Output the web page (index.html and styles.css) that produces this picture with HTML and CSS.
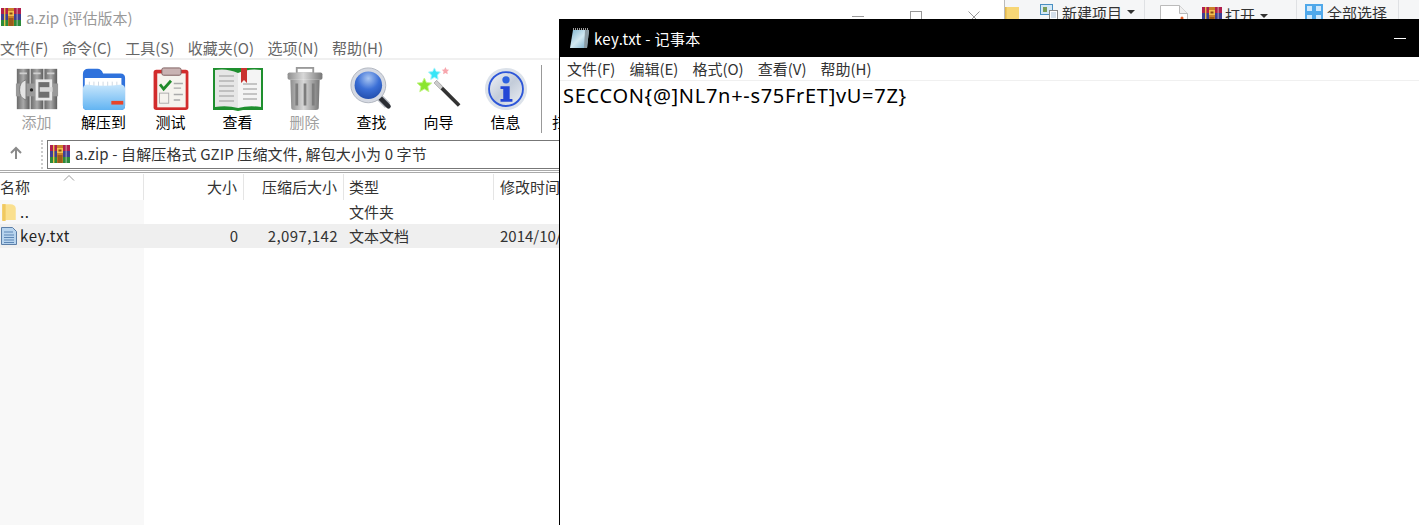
FILE: index.html
```html
<!DOCTYPE html>
<html lang="zh-CN">
<head>
<meta charset="utf-8">
<title>key.txt - 记事本</title>
<link rel="stylesheet" href="styles.css">
</head>
<body>
<svg class="defs" width="0" height="0" aria-hidden="true">
  <defs>
    <symbol id="rar" viewBox="0 0 20 18">
      <rect x="0" y="0" width="20" height="6" fill="#b01f4d"/>
      <rect x="0" y="6" width="20" height="6" fill="#3d3f94"/>
      <rect x="0" y="12" width="20" height="6" fill="#2c8a3a"/>
      <rect x="3" y="0" width="1.4" height="18" fill="#e8c14a"/>
      <rect x="15.5" y="0" width="1.4" height="18" fill="#d9d9d9" opacity=".5"/>
      <rect x="7" y="0" width="6" height="18" fill="#c9802a"/>
      <rect x="7" y="3" width="6" height="5" fill="#f2c14e"/>
      <rect x="8.5" y="4.5" width="3" height="2" fill="#8a4b14"/>
      <rect x="7.6" y="10" width="4.8" height="8" fill="#9c5a1c"/>
    </symbol>
  </defs>
</svg>
<div class="desktop">
  <div class="explorer">
    <svg class="ex-folder" viewBox="0 0 14 12"><rect width="14" height="12" fill="#f7d675"/><rect width="1.500" height="12" fill="#e3b84e"/></svg>
    <div class="ex-group ex-new">
      <svg class="ex-ic" viewBox="0 0 18 18"><rect x=".5" y=".5" width="12" height="10" fill="#d5e9f6" stroke="#4a90c2"/><rect x="3" y="3" width="4" height="5" fill="#7b9e5a"/><rect x="9.500" y="6.500" width="8" height="11" fill="#fff" stroke="#8a8a8a"/><path d="M11 9h5M11 11h5M11 13h5" stroke="#a9bfd6"/></svg>
      <span class="ex-text">新建项目</span><i class="caret"></i>
    </div>
    <div class="ex-group ex-open">
      <svg class="ex-file" viewBox="0 0 28 20"><path d="M.5.500h19l8 8v14H.5z" fill="#fff" stroke="#bbb"/><path d="M19.500.5v8h8" fill="#f0f0f0" stroke="#bbb"/><circle cx="22" cy="13" r="1.500" fill="#e5622a"/></svg>
      <svg class="ex-rar"><use href="#rar"/></svg>
      <span class="ex-text">打开</span><i class="caret"></i>
    </div>
    <div class="ex-group ex-sel">
      <svg class="ex-ic" viewBox="0 0 18 18"><path d="M1 1h7v7H1zM10 1h7v7h-7zM1 10h7v7H1zM10 10h7v7h-7z" fill="#cfe8fb" stroke="#4fa8ea" stroke-width="2"/></svg>
      <span class="ex-text">全部选择</span>
    </div>
  </div>

  <section class="rar-win">
    <header class="rar-title">
      <svg class="rar-logo"><use href="#rar"/></svg>
      <span class="rar-title-text">a.zip (评估版本)</span>
      <div class="rar-controls">
        <svg width="12" height="12" viewBox="0 0 12 12"><path d="M0 5.500h12" stroke="#999"/></svg>
        <svg width="12" height="12" viewBox="0 0 12 12"><rect x=".5" y=".5" width="11" height="11" fill="none" stroke="#999"/></svg>
        <svg width="12" height="12" viewBox="0 0 12 12"><path d="M.5.500l11 11M11.500.5l-11 11" stroke="#999"/></svg>
      </div>
    </header>
    <nav class="rar-menu">
      <span>文件(F)</span><span>命令(C)</span><span>工具(S)</span><span>收藏夹(O)</span><span>选项(N)</span><span>帮助(H)</span>
    </nav>
    <div class="toolbar">
      <div class="tool off">
        <svg class="tool-ic" viewBox="0 0 48 48">
          <defs><linearGradient id="bk" x1="0" y1="0" x2="1" y2="0"><stop offset="0" stop-color="#6a6a6a"/><stop offset=".5" stop-color="#a9a9a9"/><stop offset="1" stop-color="#5c5c5c"/></linearGradient></defs>
          <rect x="2" y="2" width="14" height="44" fill="url(#bk)"/><rect x="17" y="2" width="14" height="44" fill="url(#bk)"/><rect x="32" y="2" width="14" height="44" fill="url(#bk)"/>
          <path d="M5 7h8M20 7h8M35 7h8" stroke="#cfcfcf" stroke-width="2"/>
          <rect x="1" y="18" width="46" height="14" fill="#9a9a9a"/>
          <path d="M12 14q-7 2-7 11t7 11z" fill="#e4e4e4" stroke="#777"/>
          <rect x="24" y="15" width="15" height="20" fill="#6f6f6f" stroke="#e8e8e8" stroke-width="3"/>
          <rect x="27" y="22" width="14" height="5" fill="#d8d8d8"/>
          <circle cx="18" cy="25" r="1.800" fill="#222"/>
        </svg>
        <span class="tool-label">添加</span>
      </div>
      <div class="tool">
        <svg class="tool-ic" viewBox="0 0 48 48">
          <defs><linearGradient id="fo" x1="0" y1="0" x2="0" y2="1"><stop offset="0" stop-color="#c8e6fc"/><stop offset="1" stop-color="#62b4f2"/></linearGradient></defs>
          <path d="M1 8q0-6 6-6h10q4 0 6 5h19q5 0 5 5v30q0 5-5 5H6q-5 0-5-5z" fill="#2f72dc"/>
          <rect x="3" y="12" width="40" height="12" fill="#fff"/>
          <path d="M8 16v8M13 16v8M18 16v8M23 16v8M28 16v8M33 16v8M38 16v8" stroke="#cdd5e0"/>
          <path d="M1 24q0-4 4-5q18 3 38 0q4 1 4 5v18q0 5-5 5H6q-5 0-5-5z" fill="url(#fo)"/>
          <rect x="32" y="37" width="13" height="4" fill="#e8452a"/>
        </svg>
        <span class="tool-label">解压到</span>
      </div>
      <div class="tool">
        <svg class="tool-ic" viewBox="0 0 48 48">
          <rect x="5" y="3" width="38" height="44" rx="3" fill="#d22c2c"/>
          <rect x="9" y="7" width="31" height="37" fill="#f5f3ee"/>
          <rect x="14" y="1" width="21" height="8" rx="2" fill="#c9b3b3" stroke="#7a5a5a"/>
          <path d="M12 19l4 5l8-9" fill="none" stroke="#1f8a2a" stroke-width="3"/>
          <rect x="11.500" y="28.500" width="10" height="11" fill="none" stroke="#aaa"/>
          <path d="M27 18h10M27 23h8M27 30h10M27 36h7" stroke="#aaa" stroke-width="1.500"/>
        </svg>
        <span class="tool-label">测试</span>
      </div>
      <div class="tool tool-book">
        <svg class="tool-ic" viewBox="0 0 50 44">
          <path d="M0 1h50v42H30l-5 1l-5-1H0z" fill="#1e8f2e"/>
          <path d="M2 3q12-2 23 3v35q-11-3-23-1z" fill="#e6e6e6"/>
          <path d="M48 3q-12-2-23 3v35q11-3 23-1z" fill="#f4f4f4"/>
          <path d="M6 9h15M6 14h15M6 19h15M6 24h15M6 29h15M6 34h15M30 17h14M30 22h14M30 27h14M30 32h14" stroke="#b4b4b4" stroke-width="1.500"/>
          <path d="M28 1h6v15l-3-3l-3 3z" fill="#c9332f"/>
        </svg>
        <span class="tool-label">查看</span>
      </div>
      <div class="tool off">
        <svg class="tool-ic" viewBox="0 0 48 48">
          <defs><linearGradient id="tr" x1="0" y1="0" x2="1" y2="0"><stop offset="0" stop-color="#8e8e8e"/><stop offset=".45" stop-color="#d8d8d8"/><stop offset="1" stop-color="#777"/></linearGradient></defs>
          <rect x="15" y="1" width="18" height="6" fill="none" stroke="#999" stroke-width="2"/>
          <rect x="5" y="6" width="38" height="8" rx="2" fill="url(#tr)"/>
          <path d="M8 14h32l-1 31q0 2-3 2H12q-3 0-3-2z" fill="url(#tr)"/>
          <path d="M15 18v24M24 18v24M33 18v24" stroke="#7d7d7d" stroke-width="3"/>
        </svg>
        <span class="tool-label">删除</span>
      </div>
      <div class="tool">
        <svg class="tool-ic" viewBox="0 0 48 48">
          <defs><radialGradient id="lens" cx=".5" cy=".25" r=".8"><stop offset="0" stop-color="#a9c6f2"/><stop offset=".5" stop-color="#3b6fd6"/><stop offset="1" stop-color="#1f4aa8"/></radialGradient></defs>
          <path d="M29 30l12 12" stroke="#b5b9c2" stroke-width="8"/>
          <path d="M33 34l9 9" stroke="#2a2d33" stroke-width="5" stroke-linecap="round"/>
          <circle cx="20" cy="20" r="19" fill="#d5d9e2" stroke="#aeb3bd"/>
          <circle cx="20" cy="20" r="15" fill="url(#lens)"/>
        </svg>
        <span class="tool-label">查找</span>
      </div>
      <div class="tool">
        <svg class="tool-ic" viewBox="0 0 48 48">
          <path d="M20 16l26 26" stroke="#333" stroke-width="4"/>
          <path d="M20 16l7 7" stroke="#ccc" stroke-width="4"/>
          <polygon points="19,1 21,5 25.500,5.500 22.300,8.800 23,13.500 19,11.300 15,13.500 15.700,8.800 12.500,5.500 17,5" fill="#36e5f7" stroke="#a5f3fb"/>
          <polygon points="31,0 32.300,2.700 35,3 33,5 33.500,8 31,6.500 28.500,8 29,5 27,3 29.700,2.700" fill="#f7a6ad"/>
          <polygon points="8,12 10.300,17 16,17.500 11.800,21.300 13,27 8,24 3,27 4.200,21.300 0,17.500 5.700,17" fill="#8be52d" stroke="#c5f58a"/>
        </svg>
        <span class="tool-label">向导</span>
      </div>
      <div class="tool">
        <svg class="tool-ic" viewBox="0 0 48 48">
          <defs><linearGradient id="inf" x1="0" y1="0" x2="1" y2="1"><stop offset="0" stop-color="#f2f4f8"/><stop offset=".5" stop-color="#c3ccd9"/><stop offset="1" stop-color="#eef1f6"/></linearGradient></defs>
          <circle cx="24" cy="24" r="23" fill="#dce2ea"/>
          <circle cx="24" cy="24" r="18.500" fill="url(#inf)" stroke="#2d56d8" stroke-width="2"/>
          <circle cx="24" cy="14" r="4" fill="#2d62e0"/>
          <path d="M18 21h10v14h3v3H18v-3h3V24h-3z" fill="#2347d6"/>
        </svg>
        <span class="tool-label">信息</span>
      </div>
      <div class="tool-sep"></div>
      <div class="tool tool-last"><span class="tool-label">扫描病毒</span></div>
    </div>
    <div class="address">
      <svg class="up" width="14" height="14" viewBox="0 0 14 14"><path d="M7 13V2M2 7l5-5l5 5" fill="none" stroke="#8a8a8a" stroke-width="2"/></svg>
      <div class="grip"></div>
      <div class="addr-box">
        <svg class="addr-ic"><use href="#rar"/></svg>
        <span>a.zip - 自解压格式 GZIP 压缩文件, 解包大小为 0 字节</span>
      </div>
    </div>
    <div class="list">
      <div class="row head">
        <div class="cell name">名称<svg class="sort" width="12" height="6" viewBox="0 0 12 6"><path d="M1 5.500l5-5l5 5" fill="none" stroke="#999"/></svg></div>
        <div class="cell num">大小</div>
        <div class="cell num">压缩后大小</div>
        <div class="cell">类型</div>
        <div class="cell date">修改时间</div>
      </div>
      <div class="row">
        <div class="cell name">
          <svg class="file-ic" viewBox="0 0 14 16"><path d="M1 1h7q5 0 5 4v10H1z" fill="#fae08f"/><path d="M1 1h3v15H1z" fill="#f0c960"/></svg>
          <span class="fname">..</span>
        </div>
        <div class="cell num"></div>
        <div class="cell num"></div>
        <div class="cell">文件夹</div>
        <div class="cell date"></div>
      </div>
      <div class="row sel">
        <div class="cell name">
          <svg class="file-ic" viewBox="0 0 16 18"><path d="M.5.500h11l4 4v13H.5z" fill="#b8d4ee" stroke="#5c7fa8"/><path d="M3 5h9M3 8h10M3 10.500h10M3 13h10M3 15.500h10" stroke="#5c86b5"/></svg>
          <span class="fname">key.txt</span>
        </div>
        <div class="cell num">0</div>
        <div class="cell num size">2,097,142</div>
        <div class="cell">文本文档</div>
        <div class="cell date">2014/10/29 18:00</div>
      </div>
      <div class="row rest"><div class="cell name"></div></div>
    </div>
  </section>

  <section class="notepad">
    <header class="np-title">
      <svg class="np-ic" viewBox="0 0 19 20">
        <defs><linearGradient id="np" x1="0" y1="0" x2="1" y2="1"><stop offset="0" stop-color="#7fb4cf"/><stop offset=".5" stop-color="#d3e9f2"/><stop offset="1" stop-color="#6fa8c8"/></linearGradient></defs>
        <path d="M3 2h16l-2 18H0z" fill="url(#np)"/>
        <path d="M15 2h4l-2 18h-3z" fill="#8a9aa3"/>
        <path d="M3 1h15" stroke="#9a9a9a" stroke-width="2" stroke-dasharray="1 1"/>
      </svg>
      <span class="np-title-text">key.txt - 记事本</span>
      <i class="np-min"></i>
    </header>
    <nav class="np-menu">
      <span>文件(F)</span><span>编辑(E)</span><span>格式(O)</span><span>查看(V)</span><span>帮助(H)</span>
    </nav>
    <div class="np-body">SECCON{@]NL7n+-s75FrET]vU=7Z}</div>
  </section>
</div>
</body>
</html>
```

FILE: styles.css
```css
* { box-sizing: border-box; }
html, body { margin: 0; padding: 0; background: #fff; }
body { font-family: "Noto Sans CJK SC", "Noto Sans", sans-serif; font-size: 15px; overflow: hidden; }
.defs { position: absolute; }
.desktop { position: relative; width: 1419px; height: 525px; overflow: hidden; }

.explorer { position: absolute; left: 1004px; top: 0; right: 0; height: 19px; background: #f5f6f7; border-left: 1px solid #bbb; display: flex; overflow: hidden; }
.ex-folder { width: 14px; height: 12px; margin-top: 7px; flex: none; margin-right: 21px; }
.ex-group { display: flex; align-items: flex-start; border-right: 1px solid #dfe1e4; height: 19px; flex: none; }
.ex-new { width: 105px; }
.ex-open { width: 152px; padding-left: 15px; }
.ex-sel { width: 102px; padding-left: 8px; }
.ex-ic { width: 18px; height: 18px; margin-top: 4px; flex: none; }
.ex-file { width: 28px; height: 20px; margin-top: 5px; flex: none; }
.ex-rar { width: 20px; height: 18px; margin: 7px 3px 0 14px; flex: none; }
.ex-text { line-height: 26px; height: 19px; color: #333; white-space: nowrap; margin-left: 4px; }
.ex-open .ex-text { margin-left: 0; line-height: 30px; }
.caret { width: 0; height: 0; border: 4px solid transparent; border-top: 4px solid #333; margin: 10px 0 0 5px; flex: none; }
.ex-open .caret { margin: 14px 0 0 5px; }

.rar-win { position: absolute; left: 0; top: 0; width: 1004px; height: 525px; background: #fff; display: flex; flex-direction: column; }
.rar-title { height: 38px; flex: none; display: flex; align-items: flex-start; }
.rar-logo { width: 20px; height: 18px; margin: 8px 0 0 1px; flex: none; }
.rar-title-text { color: #999; margin-left: 5px; line-height: 35px; }
.rar-controls { margin-left: auto; display: flex; gap: 46px; padding: 11px 24px 0 0; }

.rar-menu { height: 22px; flex: none; display: flex; gap: 13.5px; color: #666; line-height: 20px; border-bottom: 2px solid #f0f0f0; white-space: nowrap; }
.toolbar { height: 76px; flex: none; display: flex; padding: 7px 0 0 3px; overflow: hidden; }
.tool { width: 67px; flex: none; display: flex; flex-direction: column; align-items: center; color: #000; }
.tool-ic { width: 44px; height: 44px; flex: none; }
.tool-book .tool-ic { width: 50px; }
.tool-label { line-height: 20px; margin-top: 1px; white-space: nowrap; }
.tool.off { color: #a0a0a0; }
.tool-sep { width: 1px; height: 68px; background: #999; flex: none; margin: -2px 0 0 2px; }
.tool-last { align-items: flex-start; padding-left: 10px; width: auto; padding-top: 45px; }
.tool-last .tool-label { margin-top: 0; }

.address { height: 37px; flex: none; display: flex; border-bottom: 3px double #aaa; padding-top: 4px; }
.up { margin: 6px 0 0 9px; flex: none; }
.grip { width: 2px; height: 29px; margin: 0 4px 0 18px; flex: none; border-left: 2px dotted #ccc; }
.addr-box { width: 957px; height: 29px; border: 1px solid #777; display: flex; align-items: center; padding: 0 0 2px 2px; color: #333; white-space: nowrap; letter-spacing: .12px; }
.addr-ic { width: 20px; height: 18px; flex: none; margin-right: 5px; }

.list { flex: 1; display: flex; flex-direction: column; }
.row { display: grid; grid-template-columns: 144px 100px 100px 150px 1fr; height: 24px; flex: none; color: #333; }
.row .cell { line-height: 24px; padding: 0 6px 0 5px; white-space: nowrap; overflow: hidden; }
.row .cell.name { background: #f8f8f8; padding: 0; display: flex; align-items: center; }
.row .num { text-align: right; }
.row .date { padding-left: 6px; }
.row .size { letter-spacing: .4px; }
.head { height: 27px; align-items: end; }
.head .cell { line-height: 26px; border-right: 1px solid #e5e5e5; height: 26px; }
.head .cell.date { border: 0; }
.head .cell.name { background: #fff; position: relative; color: #333; overflow: visible; }
.sort { position: absolute; left: 63px; top: 1px; }
.sel { background: #efefef; }
.sel .cell.name { background: #efefef; }
.file-ic { width: 16px; height: 18px; margin-left: 1px; flex: none; }
.fname { margin-left: 3px; color: #222; letter-spacing: .7px; }
.rest { flex: 1; }
.rest .cell.name { height: 100%; }

.notepad { position: absolute; left: 559px; top: 19px; right: 0; bottom: 0; background: #fff; border-left: 1px solid #000; display: flex; flex-direction: column; }
.np-title { height: 38px; background: #000; color: #fff; display: flex; align-items: center; flex: none; }
.np-ic { width: 19px; height: 20px; margin-left: 10px; flex: none; }
.np-title-text { margin-left: 5px; letter-spacing: .35px; }
.np-min { width: 12px; height: 1px; background: #fff; margin-left: auto; margin-right: 13px; }
.np-menu { height: 24px; flex: none; display: flex; gap: 14px; padding-left: 7px; color: #333; line-height: 23px; border-bottom: 1px solid #f0f0f0; white-space: nowrap; }
.np-body { font-family: "Noto Sans", sans-serif; font-size: 20px; letter-spacing: .7px; line-height: 30px; padding-left: 3px; color: #000; white-space: nowrap; }
```
